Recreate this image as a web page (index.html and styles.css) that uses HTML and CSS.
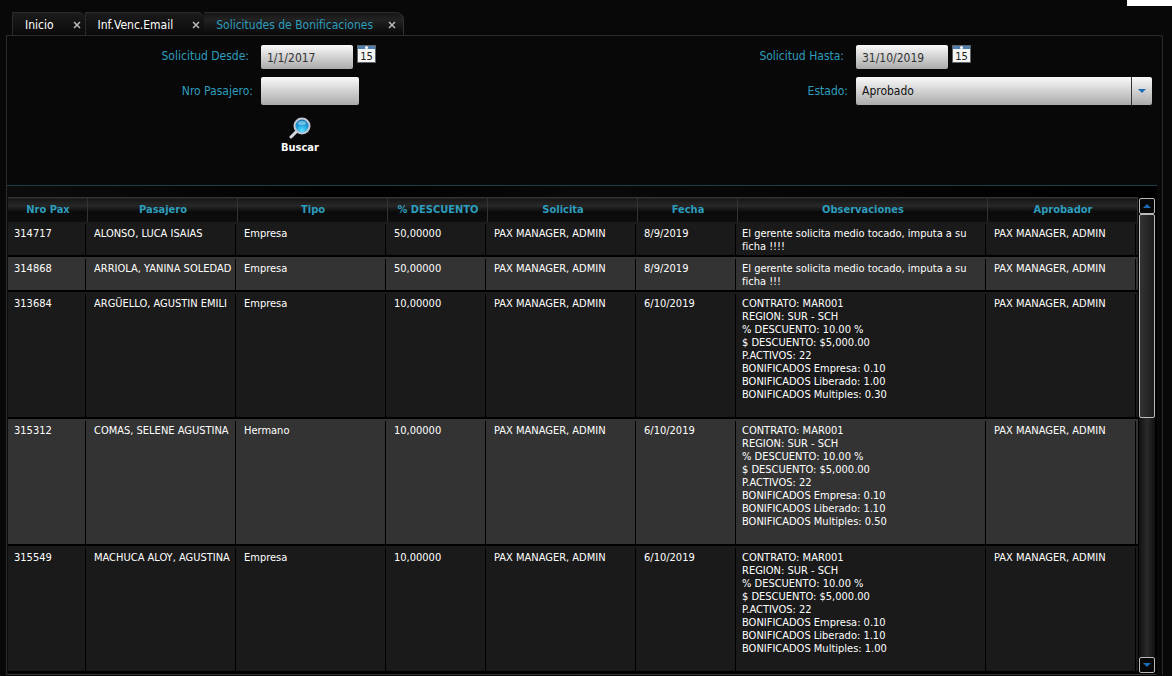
FILE: index.html
```html
<!DOCTYPE html>
<html lang="es">
<head>
  <meta charset="UTF-8">
  <meta name="viewport" content="width=device-width, initial-scale=1.0">
  <title>Solicitudes de Bonificaciones</title>
  <link rel="stylesheet" href="styles.css">
</head>
<body>
  <div class="corner"></div>

  <nav class="tabs">
    <div class="tab"><button type="button" class="tab-name">Inicio</button><button type="button" class="tab-close" aria-label="Cerrar Inicio"><svg width="8" height="8" viewBox="0 0 8 8"><path d="M1 1l6 6M7 1l-6 6"/></svg></button></div>
    <div class="tab"><button type="button" class="tab-name">Inf.Venc.Email</button><button type="button" class="tab-close" aria-label="Cerrar Inf.Venc.Email"><svg width="8" height="8" viewBox="0 0 8 8"><path d="M1 1l6 6M7 1l-6 6"/></svg></button></div>
    <div class="tab active"><button type="button" class="tab-name">Solicitudes de Bonificaciones</button><button type="button" class="tab-close" aria-label="Cerrar Solicitudes"><svg width="8" height="8" viewBox="0 0 8 8"><path d="M1 1l6 6M7 1l-6 6"/></svg></button></div>
  </nav>

  <main class="panel">
    <form class="filters">
      <label class="date-label" for="desde">Solicitud Desde:</label>
      <div class="date">
        <input type="text" id="desde" name="desde" value="1/1/2017">
        <button type="button" class="calendar" aria-label="Elegir fecha desde">
          <svg width="19" height="18" viewBox="0 0 19 18"><rect width="19" height="18" fill="#5f6468"/><rect x="1" y="4" width="17" height="13" fill="#f4f4f4"/><rect x="1" y="1" width="17" height="3" fill="#4f7fae"/><circle cx="9.500" cy="2.500" r="1.500" fill="#fff"/><text x="9.500" y="15" text-anchor="middle">15</text></svg>
        </button>
      </div>
      <label class="date-label" for="hasta">Solicitud Hasta:</label>
      <div class="date">
        <input type="text" id="hasta" name="hasta" value="31/10/2019">
        <button type="button" class="calendar" aria-label="Elegir fecha hasta">
          <svg width="19" height="18" viewBox="0 0 19 18"><rect width="19" height="18" fill="#5f6468"/><rect x="1" y="4" width="17" height="13" fill="#f4f4f4"/><rect x="1" y="1" width="17" height="3" fill="#4f7fae"/><circle cx="9.500" cy="2.500" r="1.500" fill="#fff"/><text x="9.500" y="15" text-anchor="middle">15</text></svg>
        </button>
      </div>
      <label for="pasajero">Nro Pasajero:</label>
      <input type="text" id="pasajero" name="pasajero" class="pasajero">
      <label for="estado">Estado:</label>
      <div class="combo">
        <select id="estado" name="estado">
          <option>Aprobado</option>
        </select>
        <span class="combo-arrow"><svg width="8" height="5" viewBox="0 0 8 5"><path d="M0 0h8L4 4z" fill="#1b6cb5"/></svg></span>
      </div>
      <button type="button" class="search">
        <svg width="22" height="22" viewBox="0 0 22 22">
          <defs>
            <radialGradient id="lens" cx="50%" cy="80%" r="80%"><stop offset="0" stop-color="#5fe0ff"/><stop offset="0.500" stop-color="#1f9fd8"/><stop offset="1" stop-color="#1668a8"/></radialGradient>
          </defs>
          <path d="M2 20l6-6" stroke="#d5d8e0" stroke-width="3" stroke-linecap="round"/>
          <circle cx="13" cy="9" r="7.500" fill="url(#lens)" stroke="#c3c8d4" stroke-width="2"/>
          <ellipse cx="13" cy="6" rx="4" ry="2" fill="#a8dcf5" opacity="0.6"/>
        </svg>
        Buscar
      </button>
    </form>

    <section class="results">
      <table>
        <colgroup>
          <col class="w-sm"><col class="w-lg"><col class="w-lg"><col class="w-md"><col class="w-lg"><col class="w-md"><col class="w-xl"><col class="w-lg">
        </colgroup>
        <thead>
          <tr><th>Nro Pax</th><th>Pasajero</th><th>Tipo</th><th>% DESCUENTO</th><th>Solicita</th><th>Fecha</th><th>Observaciones</th><th>Aprobador</th></tr>
        </thead>
        <tbody>
          <tr>
            <td>314717</td>
            <td><span class="clip">ALONSO, LUCA ISAIAS</span></td>
            <td>Empresa</td>
            <td>50,00000</td>
            <td>PAX MANAGER, ADMIN</td>
            <td>8/9/2019</td>
            <td class="notes">El gerente solicita medio tocado, imputa a su ficha !!!!</td>
            <td>PAX MANAGER, ADMIN</td>
          </tr>
          <tr>
            <td>314868</td>
            <td><span class="clip">ARRIOLA, YANINA SOLEDAD</span></td>
            <td>Empresa</td>
            <td>50,00000</td>
            <td>PAX MANAGER, ADMIN</td>
            <td>8/9/2019</td>
            <td class="notes">El gerente solicita medio tocado, imputa a su ficha !!!</td>
            <td>PAX MANAGER, ADMIN</td>
          </tr>
          <tr class="detail">
            <td>313684</td>
            <td><span class="clip">ARGÜELLO, AGUSTIN EMILI</span></td>
            <td>Empresa</td>
            <td>10,00000</td>
            <td>PAX MANAGER, ADMIN</td>
            <td>6/10/2019</td>
            <td class="notes">CONTRATO: MAR001<br>REGION: SUR - SCH<br>% DESCUENTO: 10.00 %<br>$ DESCUENTO: $5,000.00<br>P.ACTIVOS: 22<br>BONIFICADOS Empresa: 0.10<br>BONIFICADOS Liberado: 1.00<br>BONIFICADOS Multiples: 0.30</td>
            <td>PAX MANAGER, ADMIN</td>
          </tr>
          <tr class="detail">
            <td>315312</td>
            <td><span class="clip">COMAS, SELENE AGUSTINA</span></td>
            <td>Hermano</td>
            <td>10,00000</td>
            <td>PAX MANAGER, ADMIN</td>
            <td>6/10/2019</td>
            <td class="notes">CONTRATO: MAR001<br>REGION: SUR - SCH<br>% DESCUENTO: 10.00 %<br>$ DESCUENTO: $5,000.00<br>P.ACTIVOS: 22<br>BONIFICADOS Empresa: 0.10<br>BONIFICADOS Liberado: 1.10<br>BONIFICADOS Multiples: 0.50</td>
            <td>PAX MANAGER, ADMIN</td>
          </tr>
          <tr class="detail">
            <td>315549</td>
            <td><span class="clip">MACHUCA ALOY, AGUSTINA</span></td>
            <td>Empresa</td>
            <td>10,00000</td>
            <td>PAX MANAGER, ADMIN</td>
            <td>6/10/2019</td>
            <td class="notes">CONTRATO: MAR001<br>REGION: SUR - SCH<br>% DESCUENTO: 10.00 %<br>$ DESCUENTO: $5,000.00<br>P.ACTIVOS: 22<br>BONIFICADOS Empresa: 0.10<br>BONIFICADOS Liberado: 1.10<br>BONIFICADOS Multiples: 1.00</td>
            <td>PAX MANAGER, ADMIN</td>
          </tr>
        </tbody>
      </table>
      <div class="scrollbar">
        <button type="button" aria-label="Subir"><svg width="8" height="4" viewBox="0 0 8 4"><path d="M0 4h8L4 0z" fill="#1b6cb5"/></svg></button>
        <div class="track"><div class="thumb"></div></div>
        <button type="button" aria-label="Bajar"><svg width="8" height="4" viewBox="0 0 8 4"><path d="M0 0h8L4 4z" fill="#1b6cb5"/></svg></button>
      </div>
    </section>
  </main>
</body>
</html>
```
FILE: styles.css
```css
* {
  box-sizing: border-box;
}

body {
  margin: 0;
  padding: 12px 9px 0 6px;
  min-height: 100vh;
  background: #080808;
  color: #fff;
  font-family: Tahoma, "DejaVu Sans Condensed", "DejaVu Sans", sans-serif;
  font-size: 11px;
  line-height: 13px;
}

button, input, select {
  font: inherit;
  color: inherit;
  margin: 0;
}

button {
  padding: 0;
  border: none;
  background: none;
  cursor: pointer;
}

svg {
  display: block;
}

.corner {
  position: absolute;
  top: 0;
  right: 0;
  width: 45px;
  height: 6px;
  background: #fff;
}

/* tabs */
.tabs {
  display: flex;
  height: 23px;
  padding-left: 6px;
  font-size: 12px;
}

.tab {
  display: flex;
  align-items: center;
  padding: 3px 4px 0 12px;
  border: 1px solid #2b2b2b;
  border-right: none;
  border-bottom: none;
  border-top-right-radius: 6px;
  background: linear-gradient(#1b1b1b, #0a0a0a);
}

.tab-name {
  margin-right: 19px;
}

.tab-close {
  padding-bottom: 2px;
}

.tab-close svg {
  fill: none;
  stroke: #bbb;
  stroke-width: 1.5;
}

.tab.active {
  padding-right: 7px;
  border-left: none;
  border-right: 1px solid #333;
  border-top-right-radius: 8px;
  background: linear-gradient(#161616, #222 30%, #080808);
  color: #2d9dbd;
}

.active .tab-name {
  margin-right: 15px;
}

/* content */
.panel {
  border: 1px solid #2b2b2b;
  border-bottom: none;
  border-top-right-radius: 3px;
}

.filters {
  display: grid;
  grid-template-columns: 246px 9fr 246px 8fr;
  grid-template-rows: 25px 28px;
  gap: 8px;
  align-items: center;
  align-content: start;
  height: 149px;
  padding: 8px 10px 0 0;
  font-size: 12px;
}

.filters label {
  color: #2d9dbd;
  text-align: right;
}

.filters .date-label {
  padding-right: 4px;
}

.filters input, .filters select {
  border: none;
  border-radius: 2px;
  background: linear-gradient(#fafafa, #aaa);
  color: #111;
  padding: 0 6px;
}

.date {
  display: flex;
  align-items: flex-start;
  gap: 4px;
}

.filters .date input {
  width: 92px;
  height: 24px;
  padding-top: 2px;
  color: #333;
}

.calendar text {
  font: 10px "DejaVu Sans", sans-serif;
  fill: #222;
}

.filters .pasajero {
  width: 98px;
  height: 28px;
}

.combo {
  position: relative;
}

.combo select {
  display: block;
  width: 100%;
  height: 28px;
  appearance: none;
}

.combo-arrow {
  position: absolute;
  top: 0;
  right: 0;
  display: flex;
  align-items: center;
  justify-content: center;
  width: 21px;
  height: 28px;
  border-left: 1px solid #333;
  pointer-events: none;
}

.search {
  grid-column: 2;
  justify-self: start;
  display: flex;
  flex-direction: column;
  align-items: center;
  gap: 2px;
  padding: 4px 20px 0;
  font-size: 11px;
  font-weight: bold;
}

/* results grid */
.results {
  display: flex;
  margin-right: 5px;
  padding: 11px 2px 1px 1px;
  border-top: 1px solid #17404c;
  border-bottom: 1px solid #333;
  background: linear-gradient(90deg, #0c0c0c, #000 30%, #090909 50%, #000);
}

table {
  flex: 1;
  table-layout: fixed;
  width: 100%;
  border-collapse: collapse;
}

.w-sm {
  width: 80px;
}

.w-md {
  width: 100px;
}

.w-lg {
  width: 150px;
}

.w-xl {
  width: 250px;
}

th {
  height: 25px;
  padding: 0;
  background: linear-gradient(#333, #333) no-repeat right / 1px 100%,
    linear-gradient(#333 1px, #161616 2px, #282828 35%, #0a0a0a 60%, #0e0e0e);
  color: #2d9dbd;
  font-weight: bold;
}

td {
  padding: 5px 6px 4px;
  vertical-align: top;
  background: linear-gradient(#000, #000) no-repeat right 2px top 2px / 1px 100%,
    linear-gradient(#000, #000) no-repeat bottom / 100% 2px,
    #1a1a1a;
}

tr:nth-child(even) td {
  background-color: #333;
}

.detail td {
  padding-bottom: 18px;
}

td.notes {
  padding-left: 4px;
}

.clip {
  display: block;
  overflow: hidden;
  white-space: nowrap;
}

.scrollbar {
  display: flex;
  flex-direction: column;
  width: 17px;
  padding: 1px 0 0 1px;
}

.scrollbar button {
  display: flex;
  align-items: center;
  justify-content: center;
  height: 16px;
  border: 1px solid #bbb;
  border-radius: 2px;
  background: #080808;
}

.track {
  flex: 1;
  background: linear-gradient(90deg, #111, #2b2b2b 50%, #111);
}

.thumb {
  height: 46%;
  border: 1px solid #bbb;
  border-radius: 2px;
  background: linear-gradient(90deg, #333, #1c1c1c);
}
```
